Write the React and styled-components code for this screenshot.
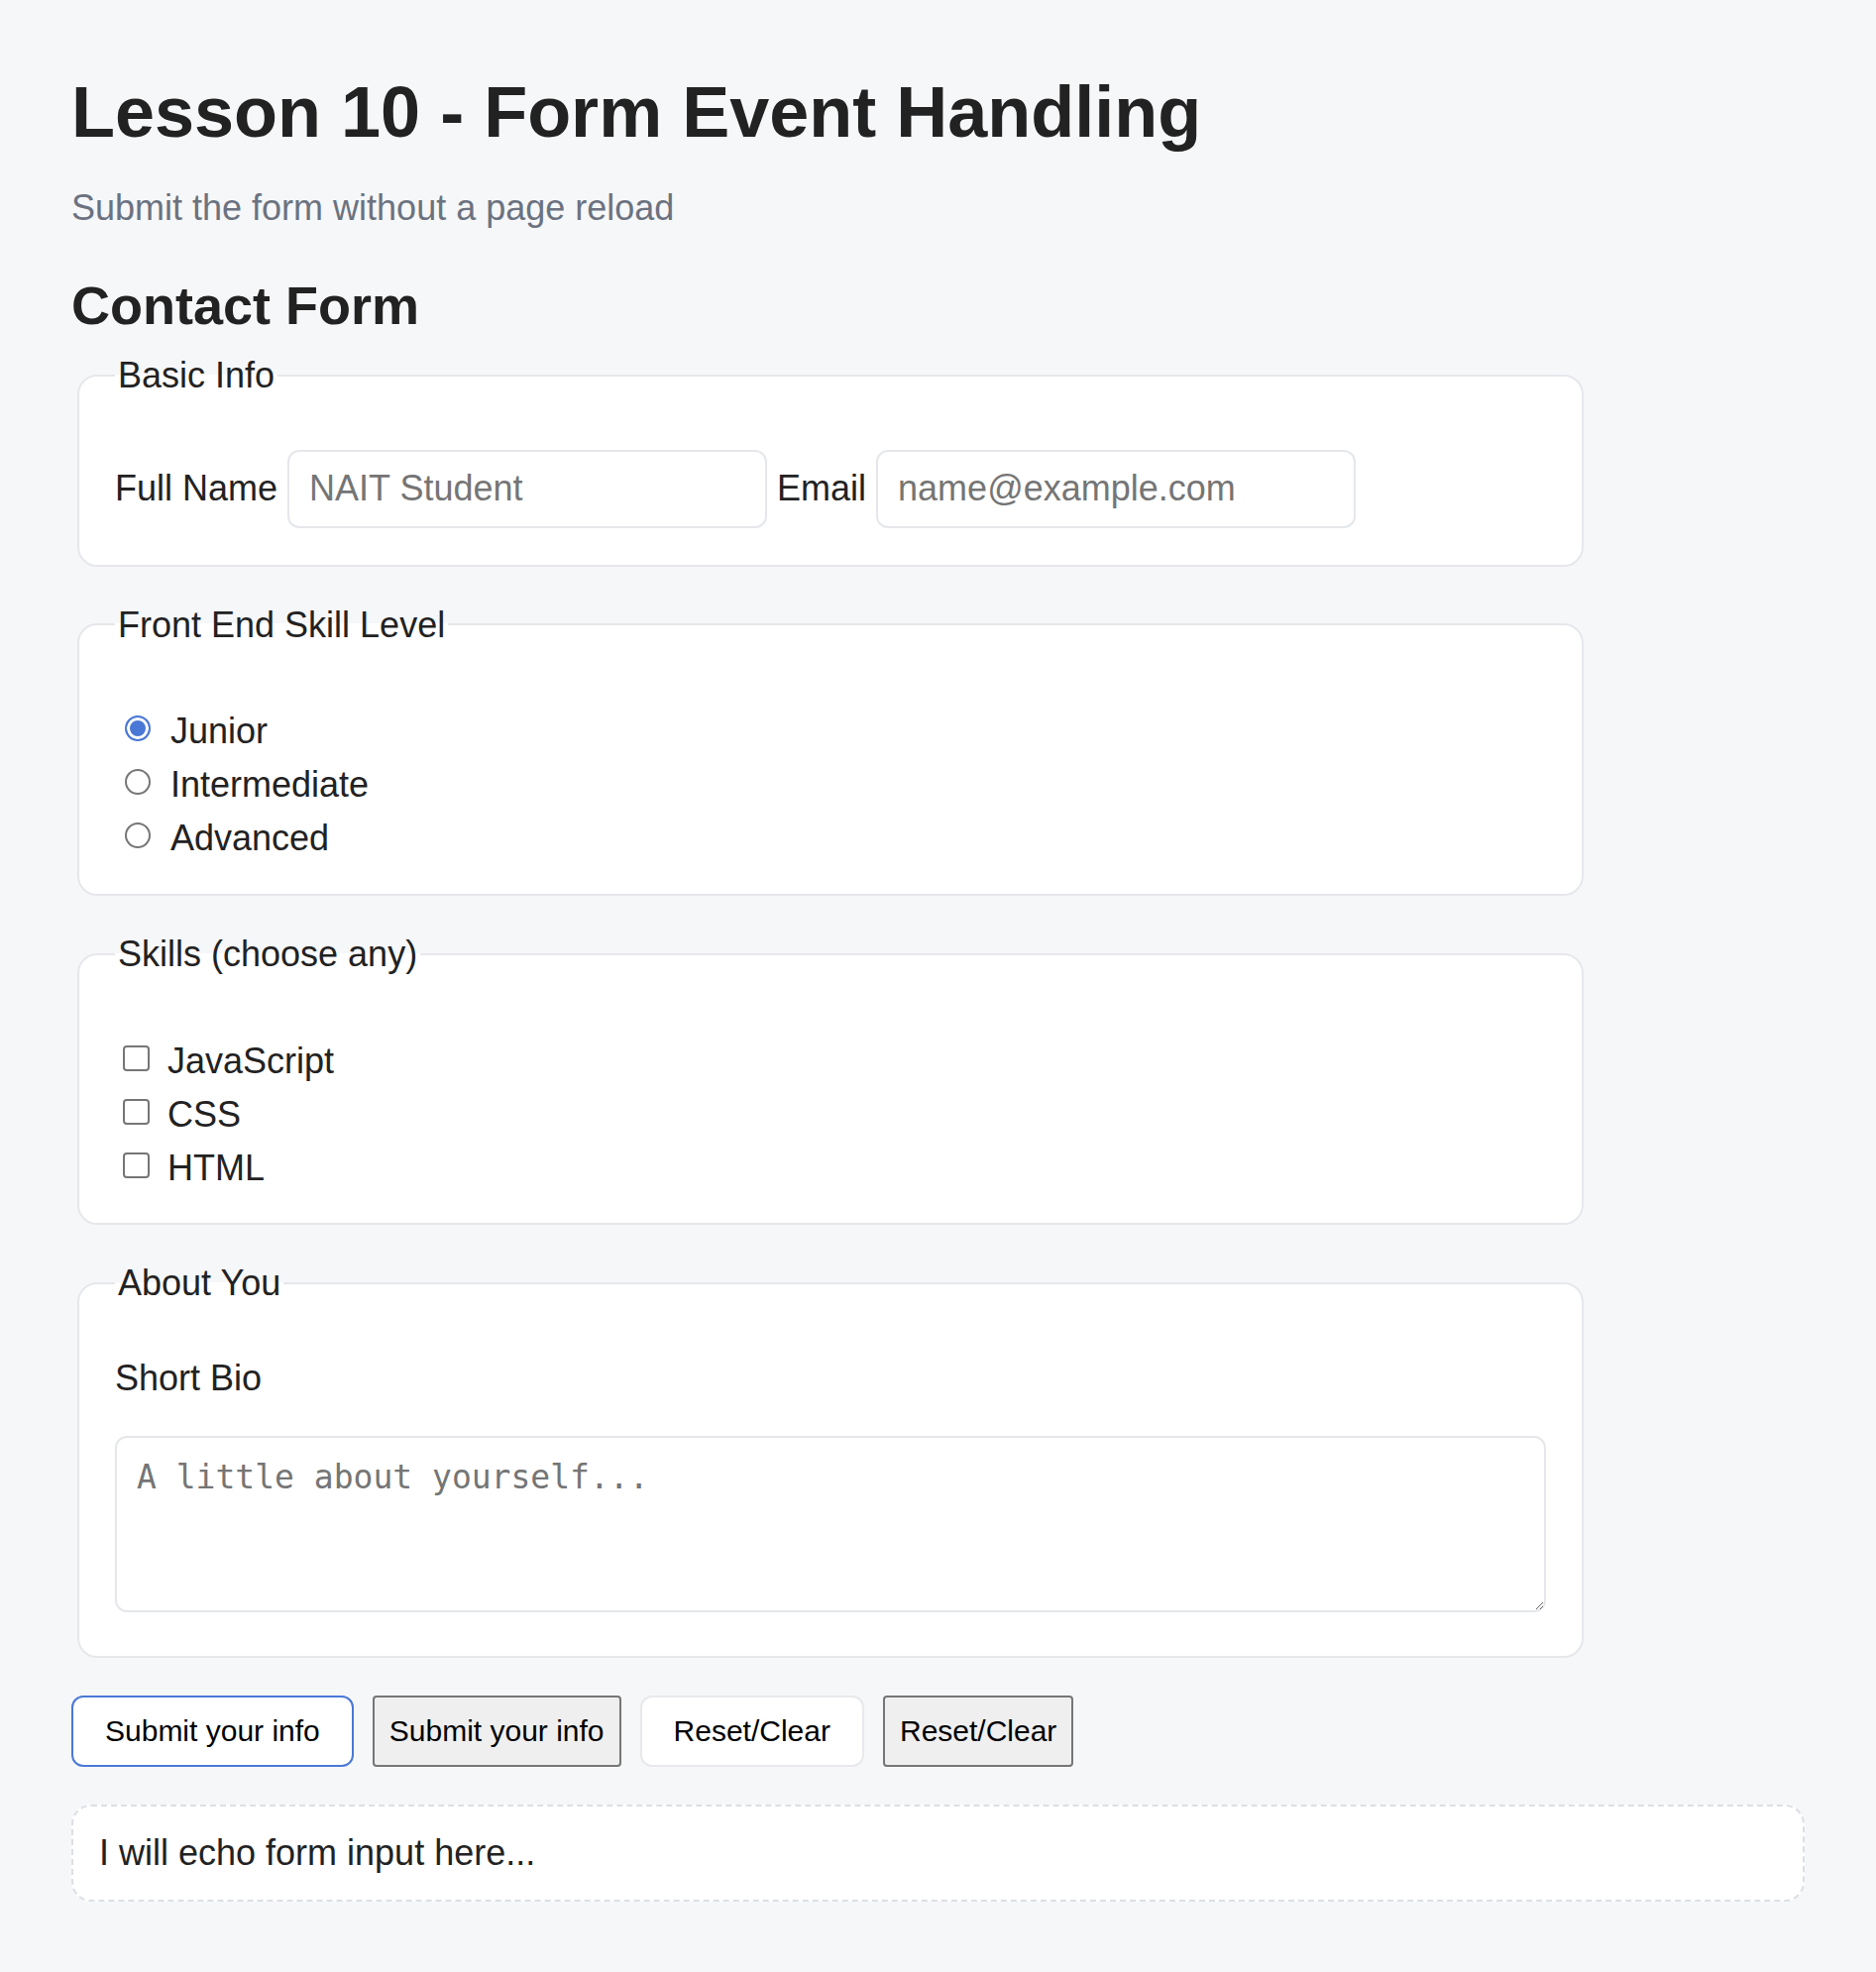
import { useState } from "react";
import styled, { createGlobalStyle, css } from "styled-components";

const GlobalStyle = createGlobalStyle`
  html, body {
    margin: 0;
    padding: 0;
    background: #f6f7f9;
  }
  body {
    font-family: "Liberation Sans", Arial, sans-serif;
    color: #222;
  }
`;

const Page = styled.main`
  box-sizing: border-box;
  min-height: 1990px;
  padding: 72px 72px 0;
  display: flex;
  flex-direction: column;
`;

const Title = styled.h1`
  margin: 0;
  font-size: 72px;
  font-weight: 700;
  line-height: 1.15;
  color: #222;
`;

const Subtitle = styled.p`
  margin: 34px 0 0;
  font-size: 36px;
  line-height: 1.15;
  color: #6b7280;
`;

const SectionTitle = styled.h2`
  margin: 47px 0 0;
  font-size: 54px;
  font-weight: 700;
  line-height: 1.15;
  color: #222;
`;

const Form = styled.form`
  margin-top: 19px;
  width: 1530px;
  display: flex;
  flex-direction: column;
  gap: 38px;
`;

const Fieldset = styled.fieldset`
  margin: 0 4px 0 6px;
  min-width: 0;
  padding: ${(p) => p.$pt}px 36px ${(p) => p.$pb}px;
  border: 2px solid #e5e7eb;
  border-radius: 20px;
  background: #fff;
`;

const Legend = styled.legend`
  padding: 0 3px;
  font-size: 36px;
  line-height: 1.15;
  color: #222;
`;

const InlineRow = styled.div`
  display: flex;
  align-items: center;
  gap: 10px;
`;

const FieldLabel = styled.label`
  font-size: 36px;
  line-height: 1.15;
  color: #222;
`;

const TextInput = styled.input`
  box-sizing: border-box;
  width: 484px;
  height: 79px;
  padding: 0 20px;
  border: 2px solid #e5e7eb;
  border-radius: 12px;
  background: #fff;
  font-family: inherit;
  font-size: 36px;
  color: #222;
  outline: none;

  &::placeholder {
    color: #757575;
  }
`;

const ChoiceList = styled.div`
  display: flex;
  flex-direction: column;
`;

const Choice = styled.label`
  display: flex;
  align-items: center;
  height: 54px;
  font-size: 36px;
  color: #222;
`;

const Radio = styled.input.attrs({ type: "radio" })`
  appearance: none;
  box-sizing: border-box;
  flex: none;
  width: 26px;
  height: 26px;
  margin: 0 20px 6px 10px;
  border: 2px solid #767676;
  border-radius: 50%;
  background: #fff;

  &:checked {
    border-color: #4a78d6;
    background: #4a78d6;
    box-shadow: inset 0 0 0 3px #fff;
  }
`;

const Checkbox = styled.input.attrs({ type: "checkbox" })`
  appearance: none;
  box-sizing: border-box;
  flex: none;
  width: 27px;
  height: 26px;
  margin: 0 18px 6px 8px;
  border: 2px solid #767676;
  border-radius: 4px;
  background: #fff;

  &:checked {
    border-color: #4a78d6;
    background: #4a78d6;
  }
`;

const BioLabel = styled.label`
  display: block;
  font-size: 36px;
  line-height: 54px;
  color: #222;
`;

const Bio = styled.textarea`
  display: block;
  box-sizing: border-box;
  width: 100%;
  height: 178px;
  margin-top: 31px;
  padding: 20px;
  border: 2px solid #e5e7eb;
  border-radius: 12px;
  background: #fff;
  font-family: "DejaVu Sans Mono", "Liberation Mono", monospace;
  font-size: 33px;
  color: #222;
  resize: vertical;
  outline: none;

  &::placeholder {
    color: #757575;
  }
`;

const Actions = styled.div`
  display: flex;
  gap: 19px;
`;

const variants = {
  primary: css`
    padding: 0 32px;
    background: #fff;
    border: 2px solid #4a78d6;
    border-radius: 12px;
  `,
  native: css`
    padding: 0 15px;
    background: #efefef;
    border: 2px solid #767676;
    border-radius: 4px;
  `,
  ghost: css`
    padding: 0 32px;
    background: #fff;
    border: 2px solid #e8e9ec;
    border-radius: 12px;
  `,
};

const Button = styled.button`
  box-sizing: border-box;
  height: 72px;
  font-family: inherit;
  font-size: 30px;
  color: #000;
  cursor: pointer;
  ${(p) => variants[p.$variant]}
`;

const Echo = styled.div`
  margin-top: 38px;
  padding: 20px 26px;
  border: 2px dashed #dcdfe4;
  border-radius: 20px;
  background: #fff;
  font-size: 36px;
  line-height: 54px;
  color: #222;
`;

const levels = ["Junior", "Intermediate", "Advanced"];
const skills = ["JavaScript", "CSS", "HTML"];
const placeholderEcho = "I will echo form input here...";

const App = () => {
  const [echo, setEcho] = useState(placeholderEcho);

  const handleSubmit = (e) => {
    e.preventDefault();
    const data = new FormData(e.currentTarget);
    const text = `${data.get("fullName") || ""} ${data.get("email") || ""}`.trim();
    setEcho(text || placeholderEcho);
  };

  return (
    <>
      <GlobalStyle />
      <Page>
        <Title>Lesson 10 - Form Event Handling</Title>
        <Subtitle>Submit the form without a page reload</Subtitle>
        <SectionTitle>Contact Form</SectionTitle>
        <Form onSubmit={handleSubmit} onReset={() => setEcho(placeholderEcho)}>
          <Fieldset $pt={54} $pb={37}>
            <Legend>Basic Info</Legend>
            <InlineRow>
              <FieldLabel htmlFor="fullName">Full Name</FieldLabel>
              <TextInput id="fullName" name="fullName" placeholder="NAIT Student" />
              <FieldLabel htmlFor="email">Email</FieldLabel>
              <TextInput id="email" name="email" type="email" placeholder="name@example.com" />
            </InlineRow>
          </Fieldset>

          <Fieldset $pt={60} $pb={29}>
            <Legend>Front End Skill Level</Legend>
            <ChoiceList>
              {levels.map((level, i) => (
                <Choice key={level}>
                  <Radio name="level" value={level} defaultChecked={i === 0} />
                  {level}
                </Choice>
              ))}
            </ChoiceList>
          </Fieldset>

          <Fieldset $pt={61} $pb={28}>
            <Legend>Skills (choose any)</Legend>
            <ChoiceList>
              {skills.map((skill) => (
                <Choice key={skill}>
                  <Checkbox name="skills" value={skill} />
                  {skill}
                </Choice>
              ))}
            </ChoiceList>
          </Fieldset>

          <Fieldset $pt={48} $pb={44}>
            <Legend>About You</Legend>
            <BioLabel htmlFor="bio">Short Bio</BioLabel>
            <Bio id="bio" name="bio" placeholder="A little about yourself..." />
          </Fieldset>

          <Actions>
            <Button type="submit" $variant="primary">Submit your info</Button>
            <Button type="submit" $variant="native">Submit your info</Button>
            <Button type="reset" $variant="ghost">Reset/Clear</Button>
            <Button type="reset" $variant="native">Reset/Clear</Button>
          </Actions>
        </Form>
        <Echo>{echo}</Echo>
      </Page>
    </>
  );
};

export default App;
